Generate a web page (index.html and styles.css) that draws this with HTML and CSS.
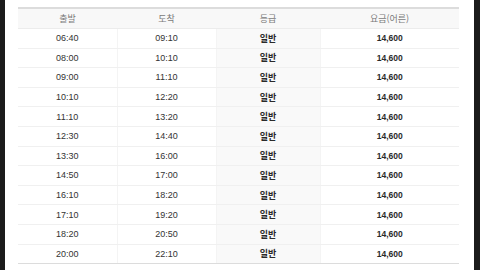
FILE: index.html
```html
<!DOCTYPE html>
<html lang="ko">
<head>
<meta charset="utf-8">
<link rel="stylesheet" href="styles.css">
</head>
<body>
<div class="page">
  <table class="timetable">
    <colgroup>
      <col class="c1"><col class="c2"><col class="c3"><col class="c4">
    </colgroup>
    <thead>
      <tr><th>출발</th><th>도착</th><th>등급</th><th>요금(어른)</th></tr>
    </thead>
    <tbody>
      <tr><td>06:40</td><td>09:10</td><td class="grade">일반</td><td class="fare">14,600</td></tr>
      <tr><td>08:00</td><td>10:10</td><td class="grade">일반</td><td class="fare">14,600</td></tr>
      <tr><td>09:00</td><td>11:10</td><td class="grade">일반</td><td class="fare">14,600</td></tr>
      <tr><td>10:10</td><td>12:20</td><td class="grade">일반</td><td class="fare">14,600</td></tr>
      <tr><td>11:10</td><td>13:20</td><td class="grade">일반</td><td class="fare">14,600</td></tr>
      <tr><td>12:30</td><td>14:40</td><td class="grade">일반</td><td class="fare">14,600</td></tr>
      <tr><td>13:30</td><td>16:00</td><td class="grade">일반</td><td class="fare">14,600</td></tr>
      <tr><td>14:50</td><td>17:00</td><td class="grade">일반</td><td class="fare">14,600</td></tr>
      <tr><td>16:10</td><td>18:20</td><td class="grade">일반</td><td class="fare">14,600</td></tr>
      <tr><td>17:10</td><td>19:20</td><td class="grade">일반</td><td class="fare">14,600</td></tr>
      <tr><td>18:20</td><td>20:50</td><td class="grade">일반</td><td class="fare">14,600</td></tr>
      <tr><td>20:00</td><td>22:10</td><td class="grade">일반</td><td class="fare">14,600</td></tr>
    </tbody>
  </table>
</div>
</body>
</html>
```
FILE: styles.css
```css
html, body {
  margin: 0;
  padding: 0;
  background: #1b1b1b;
}
.page {
  margin: 0 6px 0 5px;
  height: 270px;
  background: #fff;
  padding: 7px 0 0 13px;
  box-sizing: border-box;
  overflow: hidden;
}
.timetable {
  width: 441px;
  border-collapse: collapse;
  table-layout: fixed;
  font-family: "Liberation Sans", "Noto Sans CJK KR", sans-serif;
  font-size: 9px;
  color: #333;
}
.c1 { width: 99px; }
.c2 { width: 99px; }
.c3 { width: 104px; }
.c4 { width: 139px; }
.timetable th {
  height: 19px;
  padding: 0;
  font-weight: normal;
  font-family: "Noto Sans CJK KR", sans-serif;
  color: #7a7a7a;
  background: #f8f8f8;
  border-top: 2px solid #dcdcdc;
  border-bottom: 1px solid #ececec;
}
.timetable td {
  height: 18.6px;
  padding: 0;
  text-align: center;
  border-bottom: 1px solid #f0f0f0;
  border-left: 1px solid #f4f4f4;
}
.timetable td:first-child { border-left: none; }
.timetable tbody tr:last-child td { border-bottom: 1px solid #dcdcdc; }
.timetable td.grade {
  background: #f9f9f9;
  font-family: "Noto Sans CJK KR", sans-serif;
  font-weight: bold;
  color: #2a2a2a;
}
.timetable td.fare {
  font-size: 8.5px;
  font-weight: bold;
  color: #2a2a2a;
}
```
